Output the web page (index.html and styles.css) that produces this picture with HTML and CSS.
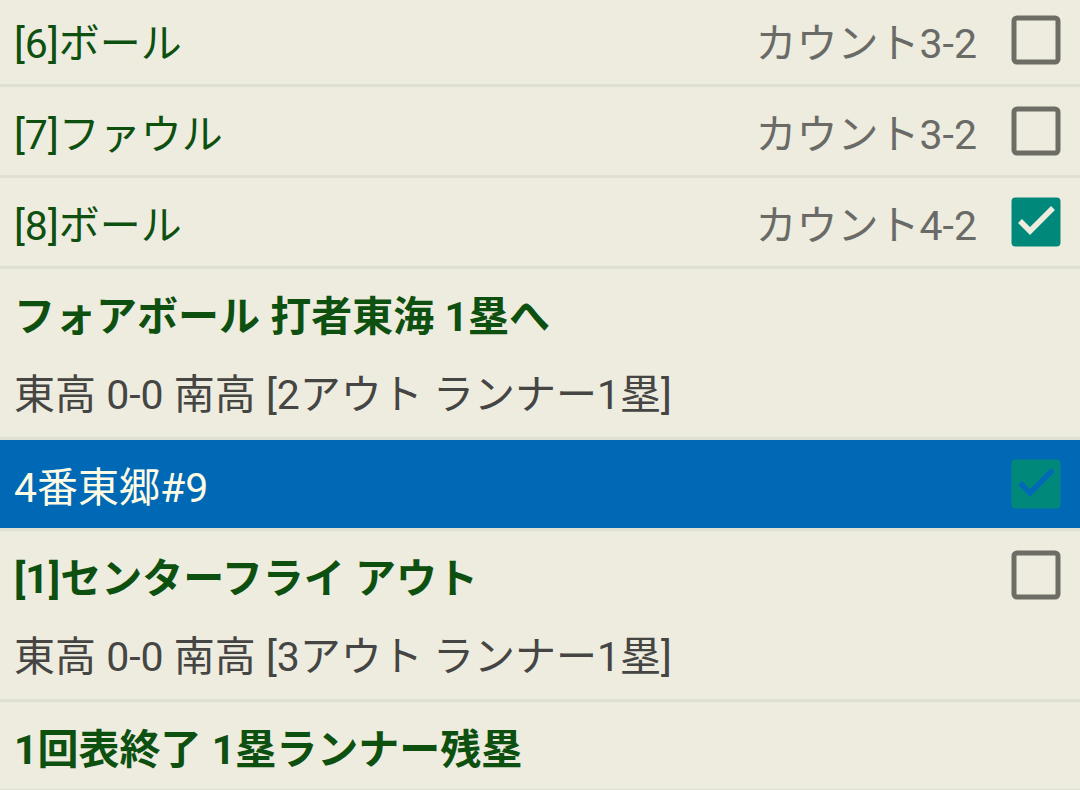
FILE: index.html
```html
<!DOCTYPE html>
<html lang="ja">
<head>
  <meta charset="UTF-8">
  <title>一球速報</title>
  <link rel="stylesheet" href="styles.css">
</head>
<body>
  <ul class="plays">
    <li class="row">
      <span class="label">[6]ボール</span>
      <span class="count">カウント3-2</span>
      <svg class="box" viewBox="0 0 50 50"><rect x="3" y="3" width="44" height="44" rx="3" class="empty"/></svg>
    </li>
    <li class="row">
      <span class="label">[7]ファウル</span>
      <span class="count">カウント3-2</span>
      <svg class="box" viewBox="0 0 50 50"><rect x="3" y="3" width="44" height="44" rx="3" class="empty"/></svg>
    </li>
    <li class="row">
      <span class="label">[8]ボール</span>
      <span class="count">カウント4-2</span>
      <svg class="box" viewBox="0 0 50 50"><rect x="0.5" y="0.5" width="49" height="49" rx="4" class="full"/><polyline points="9,24 19,34 42,11" class="tick"/></svg>
    </li>
    <li class="result">
      <div class="title-row"><span class="title">フォアボール 打者東海 1塁へ</span></div>
      <div class="score">東高 0-0 南高 [2アウト ランナー1塁]</div>
    </li>
    <li class="row batter">
      <span class="label">4番東郷#9</span>
      <svg class="box" viewBox="0 0 50 50"><rect x="0.5" y="0.5" width="49" height="49" rx="4" class="full"/><polyline points="9,24 19,34 42,11" class="tick"/></svg>
    </li>
    <li class="result">
      <div class="title-row">
        <span class="title">[1]センターフライ アウト</span>
        <svg class="box" viewBox="0 0 50 50"><rect x="3" y="3" width="44" height="44" rx="3" class="empty"/></svg>
      </div>
      <div class="score">東高 0-0 南高 [3アウト ランナー1塁]</div>
    </li>
    <li class="result last">
      <div class="title-row"><span class="title">1回表終了 1塁ランナー残塁</span></div>
    </li>
  </ul>
</body>
</html>
```

FILE: styles.css
```css
body, html {
  margin: 0;
  padding: 0;
  height: 100%;
  overflow: hidden;
  background: #edecdf;
  font-family: Roboto, "Noto Sans CJK JP", sans-serif;
  font-size: 41px;
}

.plays {
  list-style: none;
  margin: -4px 0 0 0;
  padding: 0;
}

.plays li {
  border-bottom: 3px solid #dfdfd2;
}

.row {
  display: flex;
  align-items: center;
  height: 88px;
  padding: 0 19px 0 14px;
}

.label {
  flex: 1;
  color: #0d500f;
}

.count {
  color: #6a6a66;
  margin-right: 34px;
}

.box {
  width: 50px;
  height: 50px;
  flex: none;
}

.box .empty {
  fill: none;
  stroke: #6d6d65;
  stroke-width: 5;
}

.box .full {
  fill: #00897b;
}

.box .tick {
  fill: none;
  stroke: #edecdf;
  stroke-width: 5.5;
}

.batter {
  background: #0069b6;
}

.batter .label {
  color: #fdfbe4;
}

.batter .tick {
  stroke: #0069b6;
}

.result {
  padding: 0 19px 0 14px;
}

.title-row {
  display: flex;
  align-items: center;
  height: 87px;
}

.title {
  flex: 1;
  font-weight: bold;
  color: #0d500f;
}

.score {
  height: 81px;
  line-height: 78px;
  color: #454543;
}
```
